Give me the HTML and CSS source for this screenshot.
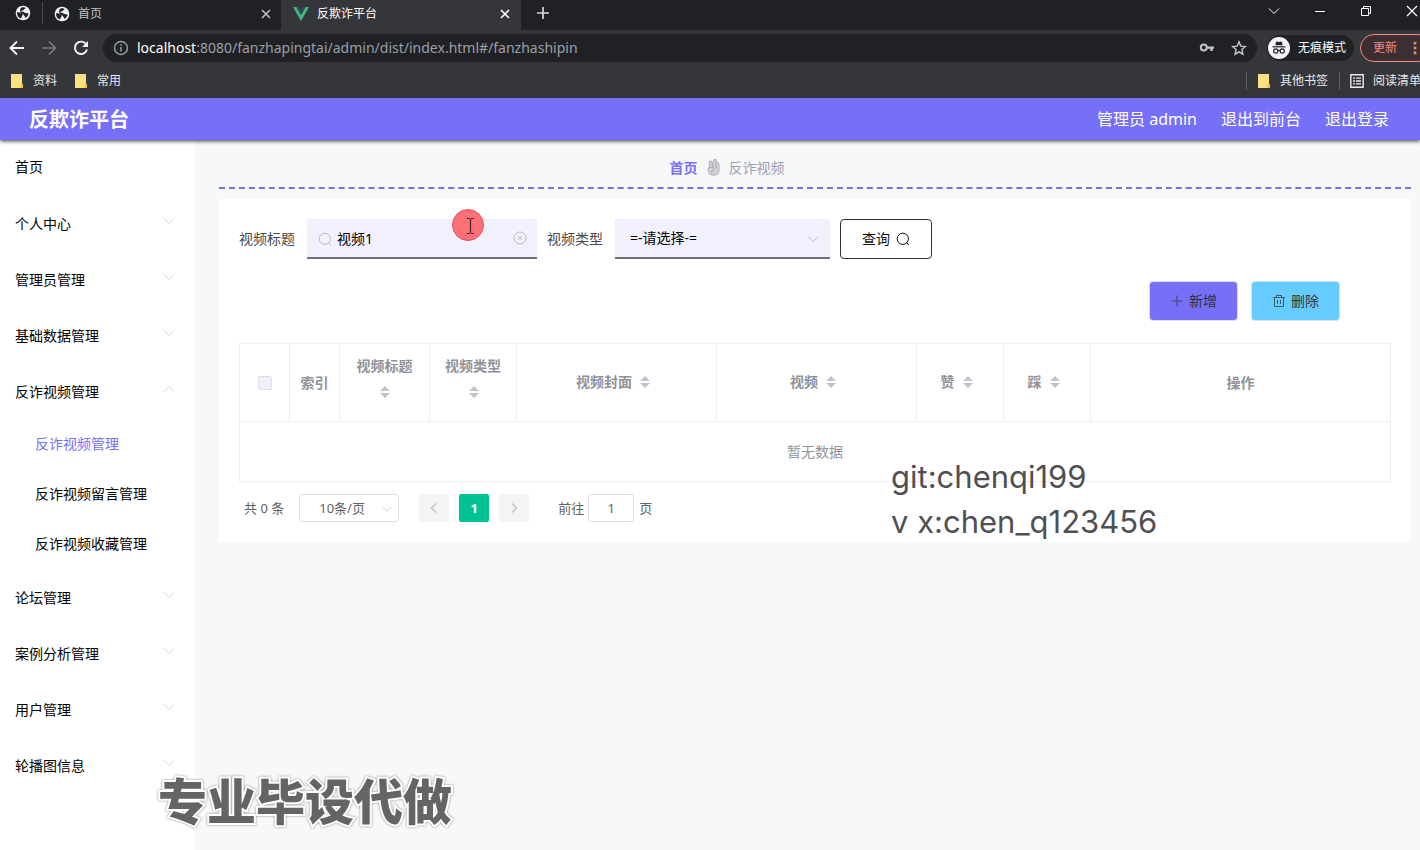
FILE: index.html
```html
<!DOCTYPE html>
<html lang="zh-CN">
<head>
<meta charset="utf-8">
<title>反欺诈平台</title>
<link rel="stylesheet" href="styles.css">
</head>
<body>
<svg class="defs" aria-hidden="true">
  <symbol id="globe" viewBox="0 0 16 16"><circle cx="8" cy="8" r="7.3" fill="#f1f3f4"/><path d="M2 7.200C3.500 7 5 7.500 6 8.300S8 9 7.600 10.300 6.300 11.500 6.200 13.600C3.500 13 1.800 10.500 2 7.200ZM7 2.200C8.500 2 10 2.300 10.600 2.800 10.400 4.200 9 4.200 8.500 5 8 5.800 6.300 5.200 6.200 6.200 6.500 7 9 6.500 9.700 7.700 10.800 8.200 12 8 13.600 8.600 13.200 10.600 12 12.200 10.400 13 10.500 11.500 9.300 11.200 8.900 10 8.200 8.800 6 8.500 5.400 7.400 4.900 6.300 5.400 5.500 5.300 4.600 5.200 3.500 6 2.600 7 2.200Z" fill="#202124"/></symbol>
  <symbol id="close" viewBox="0 0 10 10"><path d="M1 1 9 9M9 1 1 9" fill="none" stroke="currentColor" stroke-width="1.600"/></symbol>
  <symbol id="folder" viewBox="0 0 14 16"><path d="M1 1h11v9.500l1 .8V15H1Z" fill="#fbdf82"/><path d="M10.500 15v-3.500l1.500-1 1 .8V15Z" fill="#efc13f"/></symbol>
  <symbol id="down" viewBox="0 0 12 8"><path d="M1 1.500 6 6.500 11 1.500" fill="none" stroke="currentColor"/></symbol>
  <symbol id="search" viewBox="0 0 14 14"><circle cx="6.800" cy="6.800" r="5.600" fill="none" stroke="currentColor"/><path d="M10.600 10.600 12.800 13" stroke="currentColor"/></symbol>
  <symbol id="sort" viewBox="0 0 10 12"><path d="M5 0 10 5H0ZM0 7h10L5 12Z" fill="currentColor"/></symbol>
</svg>

<div class="browser">
  <div class="tabs">
    <div class="pinned"><svg class="i16"><use href="#globe"/></svg></div>
    <div class="tab"><svg class="i16"><use href="#globe"/></svg><span class="tab-title">首页</span><button class="plain" aria-label="关闭标签页"><svg class="i10"><use href="#close"/></svg></button></div>
    <div class="tab active"><svg class="i16" viewBox="0 0 16 16"><path d="M0 1h3.500L8 9l4.500-8H16L8 15Z" fill="#41b883"/><path d="M3.500 1h2.700L8 4.300 9.800 1h2.700L8 9Z" fill="#35495e"/></svg><span class="tab-title">反欺诈平台</span><button class="plain" aria-label="关闭标签页"><svg class="i10"><use href="#close"/></svg></button></div>
    <button class="plain new-tab" aria-label="新标签页"><svg class="i12" viewBox="0 0 12 12"><path d="M6 0v12M0 6h12" stroke="currentColor" stroke-width="1.700"/></svg></button>
    <div class="window-buttons">
      <button class="plain" aria-label="搜索标签页"><svg class="i12" viewBox="0 0 12 12"><path d="M1 3.500 6 8.500 11 3.500" fill="none" stroke="currentColor"/></svg></button>
      <button class="plain" aria-label="最小化"><svg class="i12" viewBox="0 0 12 12"><path d="M1 6.500h10" stroke="currentColor"/></svg></button>
      <button class="plain" aria-label="还原"><svg class="i12" viewBox="0 0 12 12"><path d="M1.500 3.500h7v7h-7ZM3.500 3.500v-2h7v7h-2" fill="none" stroke="currentColor"/></svg></button>
      <button class="plain" aria-label="关闭"><svg class="i12" viewBox="0 0 12 12"><path d="M1 1 11 11M11 1 1 11" stroke="currentColor" stroke-width="1.200"/></svg></button>
    </div>
  </div>
  <div class="toolbar">
    <button class="plain" aria-label="后退"><svg class="i16" viewBox="0 0 16 16"><path d="M15 8H2.500M8 1.500 1.500 8 8 14.500" fill="none" stroke="#f1f3f4" stroke-width="1.900"/></svg></button>
    <button class="plain" aria-label="前进"><svg class="i16" viewBox="0 0 16 16"><path d="M1 8h12.500M8 1.500 14.500 8 8 14.500" fill="none" stroke="#7d7f82" stroke-width="1.700"/></svg></button>
    <button class="plain" aria-label="刷新"><svg class="i16" viewBox="0 0 16 16"><path d="M13.300 4.500A6.200 6.200 0 1 0 14 9.600" fill="none" stroke="#f1f3f4" stroke-width="1.900"/><path d="M15 1v6H9Z" fill="#f1f3f4"/></svg></button>
    <div class="omnibox">
      <svg class="i16" viewBox="0 0 16 16"><circle cx="8" cy="8" r="6.500" fill="none" stroke="#9aa0a6" stroke-width="1.400"/><path d="M8 7v4.500M8 4.200v1.600" stroke="#9aa0a6" stroke-width="1.500"/></svg>
      <span class="url"><b>localhost</b>:8080/fanzhapingtai/admin/dist/index.html#/fanzhashipin</span>
      <svg class="i16" viewBox="0 0 16 16"><circle cx="4.800" cy="7.500" r="3" fill="none" stroke="#c4c7ca" stroke-width="2"/><path d="M7.500 6.500H15v2.300h-1.300V11h-2.400V8.800H7.500Z" fill="#c4c7ca"/></svg>
      <svg class="i16" viewBox="0 0 16 16"><path d="m8 1.800 1.800 4.300 4.600.4-3.500 3.100 1 4.600L8 11.800l-3.900 2.400 1-4.600L1.600 6.500l4.600-.4Z" fill="none" stroke="#c4c7ca" stroke-width="1.400"/></svg>
    </div>
    <button class="incognito"><svg class="i22" viewBox="0 0 22 22"><circle cx="11" cy="11" r="11" fill="#f1f3f4"/><path d="M7.300 8.200 8.300 4.500 11 5l2.700-.5 1 3.700Z" fill="#202124"/><path d="M4.500 9.800h13" stroke="#202124" stroke-width="1.200"/><circle cx="7.800" cy="14" r="2.100" fill="none" stroke="#202124" stroke-width="1.200"/><circle cx="14.200" cy="14" r="2.100" fill="none" stroke="#202124" stroke-width="1.200"/><path d="M9.800 13.500h2.400" stroke="#202124"/></svg>无痕模式</button>
    <button class="update">更新<svg class="dots" viewBox="0 0 4 16"><path d="M.5 1h3v3h-3ZM.5 6.500h3v3h-3ZM.5 12h3v3h-3Z" fill="currentColor"/></svg></button>
  </div>
  <div class="bookmarks">
    <a href="#a"><svg class="folder"><use href="#folder"/></svg>资料</a>
    <a href="#b"><svg class="folder"><use href="#folder"/></svg>常用</a>
    <div class="bookmarks-right">
      <a href="#c"><svg class="folder"><use href="#folder"/></svg>其他书签</a>
      <a href="#d"><svg class="i14" viewBox="0 0 14 14"><path d="M.8.800h12.400v12.400H.8Z" fill="none" stroke="#e8eaed" stroke-width="1.400"/><path d="M3 4.200h2M3 7h2M3 9.800h2M6 4.200h5M6 7h5M6 9.800h5" stroke="#e8eaed" stroke-width="1.300"/></svg>阅读清单</a>
    </div>
  </div>
</div>

<header class="header">
  <h1>反欺诈平台</h1>
  <nav><span>管理员 admin</span><a href="#front">退出到前台</a><a href="#logout">退出登录</a></nav>
</header>

<div class="layout">
  <nav class="sidebar">
    <a class="item" href="#home">首页</a>
    <button class="item">个人中心<svg class="arrow"><use href="#down"/></svg></button>
    <button class="item">管理员管理<svg class="arrow"><use href="#down"/></svg></button>
    <button class="item">基础数据管理<svg class="arrow"><use href="#down"/></svg></button>
    <button class="item" aria-expanded="true">反诈视频管理<svg class="arrow up"><use href="#down"/></svg></button>
    <a class="sub current" href="#v">反诈视频管理</a>
    <a class="sub" href="#m">反诈视频留言管理</a>
    <a class="sub" href="#s">反诈视频收藏管理</a>
    <button class="item">论坛管理<svg class="arrow"><use href="#down"/></svg></button>
    <button class="item">案例分析管理<svg class="arrow"><use href="#down"/></svg></button>
    <button class="item">用户管理<svg class="arrow"><use href="#down"/></svg></button>
    <button class="item">轮播图信息<svg class="arrow"><use href="#down"/></svg></button>
  </nav>

  <main class="main">
    <div class="breadcrumb">
      <a href="#home">首页</a>
      <svg class="hand" viewBox="0 0 12 16"><path d="M2.500 7.500 2 4C1.900 2.300 4.200 2 4.600 3.600L5.300 6 6 2C6.300.300 8.800.500 8.700 2.200V4c2-.3 2.500 1 2.400 3V11C11 14 9 15.500 6 15.500S1 13.500 1 10.500C1 9 1.500 8 2.500 7.500Z" fill="#d2d3d5" stroke="#b4b6ba"/><path d="M2.500 8.500C5 7.500 7 8.500 6.200 10S4 11 4.200 13M8.500 4v5M5.300 6v2" fill="none" stroke="#a8aaae"/></svg>
      <span>反诈视频</span>
    </div>
    <section class="panel">
      <form class="search">
        <label for="title">视频标题</label>
        <div class="field title-field">
          <svg class="field-icon"><use href="#search"/></svg>
          <input id="title" type="text" value="视频1">
          <button type="button" class="plain clear" aria-label="清空"><svg class="i14" viewBox="0 0 14 14"><circle cx="7" cy="7" r="6" fill="none" stroke="currentColor"/><path d="m4.800 4.800 4.400 4.400M9.200 4.800 4.800 9.200" stroke="currentColor"/></svg></button>
        </div>
        <label class="second" for="type">视频类型</label>
        <div class="field type-field">
          <select id="type"><option>=-请选择-=</option></select>
          <svg class="select-arrow"><use href="#down"/></svg>
        </div>
        <button type="button" class="query">查询<svg class="i14"><use href="#search"/></svg></button>
      </form>
      <div class="actions">
        <button class="add"><svg class="i14" viewBox="0 0 14 14"><path d="M7 1.500v11M1.500 7h11" stroke="currentColor"/></svg>新增</button>
        <button class="delete"><svg class="i14" viewBox="0 0 14 14"><path d="M1 3.500h12M4.500 3.500v-2h5v2M2.500 3.500v9h9v-9M5.500 6v4M8.500 6v4" fill="none" stroke="currentColor"/></svg>删除</button>
      </div>
      <table class="data">
        <colgroup><col class="w50"><col class="w50"><col class="w90"><col class="w87"><col class="w200"><col class="w200"><col class="w87"><col class="w87"><col></colgroup>
        <thead>
          <tr>
            <th><input type="checkbox" aria-label="全选"></th>
            <th>索引</th>
            <th class="stacked">视频标题<svg class="sort"><use href="#sort"/></svg></th>
            <th class="stacked">视频类型<svg class="sort"><use href="#sort"/></svg></th>
            <th class="sortable">视频封面<svg class="sort"><use href="#sort"/></svg></th>
            <th class="sortable">视频<svg class="sort"><use href="#sort"/></svg></th>
            <th class="sortable">赞<svg class="sort"><use href="#sort"/></svg></th>
            <th class="sortable">踩<svg class="sort"><use href="#sort"/></svg></th>
            <th>操作</th>
          </tr>
        </thead>
        <tbody><tr><td colspan="9">暂无数据</td></tr></tbody>
      </table>
      <div class="pagination">
        <span>共 0 条</span>
        <div class="size"><select aria-label="每页条数"><option>10条/页</option></select><svg class="size-arrow"><use href="#down"/></svg></div>
        <div class="pages">
          <button aria-label="上一页" disabled><svg class="i12" viewBox="0 0 12 12"><path d="M8 1.500 3.500 6 8 10.500" fill="none" stroke="currentColor" stroke-width="1.500"/></svg></button>
          <button class="on">1</button>
          <button aria-label="下一页" disabled><svg class="i12" viewBox="0 0 12 12"><path d="M4 1.500 8.500 6 4 10.500" fill="none" stroke="currentColor" stroke-width="1.500"/></svg></button>
        </div>
        <label for="page">前往</label><input id="page" type="text" value="1"><span>页</span>
      </div>
    </section>
  </main>
</div>

<div class="contact"><p>git:chenqi199</p><p>v x:chen_q123456</p></div>
<div class="banner">专业毕设代做</div>
<svg class="pointer" viewBox="0 0 32 32"><circle cx="16" cy="16" r="15.500" fill="#fd7077" stroke="#e2525c"/><path d="M15 9.500h3M19 9.500h3M15 24.500h3M19 24.500h3M18.500 10v14" stroke="#4a2029" stroke-width="1.200"/></svg>
</body>
</html>
```
FILE: styles.css
```css
* { box-sizing: border-box; }
body {
  margin: 0;
  min-height: 100vh;
  position: relative;
  display: flex;
  flex-direction: column;
  overflow-x: hidden;
  background: #f7f8fa;
  color: #000;
  font: 14px/20px "Noto Sans", "Noto Sans CJK SC", sans-serif;
}
button, input, select { font: inherit; color: inherit; margin: 0; }
button { cursor: pointer; }
a { color: inherit; text-decoration: none; }
svg { display: block; flex: none; }
.defs { position: absolute; width: 0; height: 0; }
.i10 { width: 10px; height: 10px; }
.i12 { width: 12px; height: 12px; }
.i14 { width: 14px; height: 14px; }
.i16 { width: 16px; height: 16px; }
.i22 { width: 22px; height: 22px; }
.plain { border: 0; padding: 0; background: none; }

/* Browser chrome */
.browser { background: #35363a; color: #e8eaed; font-size: 12px; overflow: hidden; }
.tabs { display: flex; height: 30px; background: #202124; padding-left: 15px; }
.pinned { display: flex; align-items: center; width: 28px; height: 22px; margin-top: 2px; border-right: 1px solid #4a4c50; }
.tab { display: flex; align-items: center; gap: 8px; width: 238px; padding: 0 10px 3px 11px; color: #bdc1c6; }
.tab-title { flex: 1; }
.tab.active { width: 240px; padding-left: 12px; padding-right: 11px; background: #35363a; color: #fff; }
.new-tab { padding: 0 16px 4px; color: #d5d7da; }
.window-buttons { display: flex; gap: 34px; margin-left: auto; margin-right: 2px; padding-bottom: 9px; color: #fff; }
.toolbar { display: flex; align-items: center; height: 36px; padding-left: 9px; gap: 16px; }
.omnibox { flex: 1; min-width: 0; display: flex; align-items: center; gap: 16px; height: 28px; margin-left: -2px; padding: 0 10px; border-radius: 14px; background: #202124; }
.url { flex: 1; margin-left: -8px; font-size: 14px; color: #9aa0a6; white-space: nowrap; }
.url b { font-weight: 400; color: #fff; }
.incognito { display: flex; align-items: center; gap: 8px; height: 26px; margin-left: -6px; padding: 0 8px 0 1px; border: 0; border-radius: 13px; background: #202124; color: #fff; white-space: nowrap; }
.update { display: flex; align-items: center; gap: 16px; height: 28px; margin-left: -10px; margin-right: -12px; padding: 0 14px 0 12px; border: 1px solid #f28b82; border-radius: 14px; background: #3b2f31; color: #f28b82; white-space: nowrap; }
.dots { width: 4px; height: 14px; }
.bookmarks { display: flex; gap: 17px; height: 32px; padding: 0 0 3px 10px; align-items: center; }
.bookmarks a { display: flex; align-items: center; gap: 9px; white-space: nowrap; }
.folder { width: 14px; height: 16px; }
.bookmarks-right { display: flex; margin-left: auto; margin-right: -1px; }
.bookmarks-right a { padding: 0 11px 0 10px; border-left: 1px solid #5f6368; height: 18px; }
.bookmarks-right a:last-child { padding-right: 0; }

/* Application header */
.header { position: relative; display: flex; justify-content: space-between; align-items: center; height: 42px; padding: 0 31px 0 29px; background: #766ff8; color: #fff; box-shadow: 0 1px 4px #333; }
.header h1 { margin: 0; font-size: 20px; line-height: 30px; padding-top: 2px; }
.header nav { display: flex; gap: 24px; font-size: 16px; }

/* Sidebar */
.layout { display: flex; flex: 1; }
.sidebar { flex: none; width: 195px; background: #fff; }
.item { display: flex; align-items: center; justify-content: space-between; width: 100%; height: 56px; padding: 0 20px 0 15px; border: 0; background: none; }
a.item { padding-bottom: 2px; }
.arrow { width: 12px; height: 8px; margin-bottom: 6px; color: #d4d6da; }
.up { transform: rotate(180deg); }
.sub { display: flex; align-items: center; height: 50px; padding: 0 0 2px 35px; }
.current { color: #766ff8; }

/* Content */
.main { flex: 1; min-width: 0; padding: 0 9px 0 24px; }
.breadcrumb { display: flex; justify-content: center; gap: 9px; height: 49px; padding: 18px 176px 0 0; border-bottom: 2px dashed #7a72dc; color: #97a0b3; }
.breadcrumb a { color: #766ff8; font-weight: 600; }
.hand { width: 13px; height: 18px; }
.panel { margin-top: 10px; padding: 20px; background: #fff; }
.search { display: flex; align-items: center; color: #48494d; }
.search label { margin-right: 12px; }
.search .second { margin-left: 10px; }
.field { position: relative; height: 40px; background: #f3f0fe; border-bottom: 2px solid #717078; color: #000; }
.field input, .field select { width: 100%; height: 38px; border: 0; background: none; appearance: none; outline: 0; }
.field input { padding: 0 30px; }
.field select { padding: 0 15px; }
.title-field { width: 230px; }
.type-field { width: 215px; }
.field-icon { position: absolute; left: 11px; top: 13px; width: 14px; height: 14px; color: #b9bbc4; }
.clear { position: absolute; right: 10px; top: 12px; color: #b9bbc4; }
.select-arrow { position: absolute; right: 11px; top: 16px; width: 12px; height: 8px; color: #b9bbc4; }
.query { display: flex; align-items: center; justify-content: center; gap: 6px; width: 92px; height: 40px; margin-left: 10px; border: 1px solid #333; border-radius: 4px; background: #fff; color: #111; }
.actions { display: flex; justify-content: flex-end; gap: 13px; margin: 22px 51px 22px 0; }
.actions button { display: flex; align-items: center; justify-content: center; gap: 5px; width: 89px; height: 40px; border: 1px solid #dcdfe6; border-radius: 4px; color: #333; }
.actions .add { background: #766ff8; }
.actions .delete { background: #66ccff; }
.actions svg { opacity: .75; }
.data { width: 100%; border-collapse: collapse; table-layout: fixed; }
.w50 { width: 50px; }
.w87 { width: 87px; }
.w90 { width: 90px; }
.w200 { width: 200px; }
.data th { height: 78px; padding: 0 8px; border: 1px solid #ebeef2; color: #909399; line-height: 26px; }
.data .sortable { padding-bottom: 2px; }
.data .stacked { padding-bottom: 7px; }
.data td { height: 60px; padding: 0; border: 1px solid #ebeef2; color: #909399; text-align: center; }
.data input { display: block; width: 14px; height: 14px; margin: auto; appearance: none; border: 1px solid #dcdfe6; border-radius: 2px; background: #f0effc; }
.sort { display: inline-block; width: 10px; height: 12px; margin: 0 7px 0 8px; vertical-align: -1px; color: #c0c4cc; }
.pagination { display: flex; align-items: center; height: 28px; margin-top: 12px; padding-left: 5px; color: #606266; font-size: 13px; }
.size { position: relative; width: 100px; height: 28px; margin-left: 15px; }
.size select { width: 100%; height: 28px; padding: 0 19px; border: 1px solid #dcdfe6; border-radius: 3px; background: #fff; appearance: none; }
.size-arrow { position: absolute; right: 7px; top: 11px; width: 10px; height: 8px; color: #c0c4cc; }
.pages { display: flex; gap: 10px; margin: 0 29px 0 20px; }
.pages button { display: flex; align-items: center; justify-content: center; width: 30px; height: 28px; padding: 0; border: 0; border-radius: 2px; background: #f4f4f5; color: #c0c4cc; }
.pages .on { background: #00c292; color: #fff; font-weight: 700; }
.pagination > input { width: 46px; height: 28px; margin: 0 5px 0 4px; padding: 0; border: 1px solid #dcdfe6; border-radius: 3px; text-align: center; }

/* Layers over the page */
.contact { position: absolute; left: 891px; top: 454px; color: #505052; font: 400 31px/45px Inter, sans-serif; white-space: pre; }
.contact p { margin: 0; }
.banner { position: absolute; left: 158px; top: 764px; color: #646464; font: 900 49px/70px "Noto Sans CJK SC", sans-serif; white-space: nowrap; -webkit-text-stroke: 4px #fff; paint-order: stroke fill; filter: drop-shadow(0 0 1px #888); }
.pointer { position: absolute; left: 452px; top: 209px; width: 32px; height: 32px; }
```
